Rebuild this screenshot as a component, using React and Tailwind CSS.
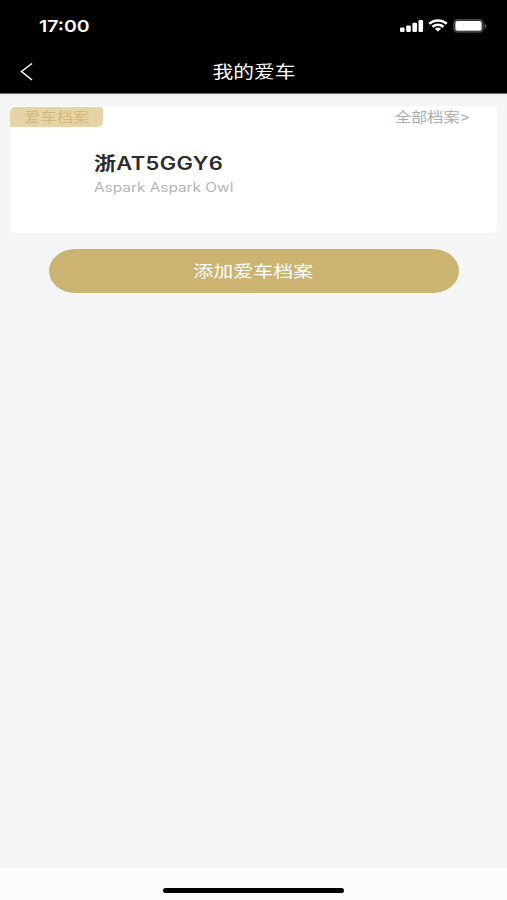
import { useState } from 'react';

// Status bar icons
const SignalIcon = () => (
  <svg width="24" height="13" viewBox="0 0 24 13" fill="#fff">
    <rect x="0" y="7.6" width="4.6" height="4.4" rx="1.2" />
    <rect x="6.2" y="5.4" width="4.6" height="6.6" rx="1.2" />
    <rect x="12.4" y="2.8" width="4.6" height="9.2" rx="1.2" />
    <rect x="18.5" y="0" width="4.6" height="12" rx="1.2" />
  </svg>
);

const WifiIcon = () => (
  <svg width="20" height="13" viewBox="0 0 17 11.6" preserveAspectRatio="none" fill="#fff">
    <path d="M8.5 2.4c2.4 0 4.6.9 6.3 2.5.1.1.3.1.4 0l1.2-1.2c.2-.2.2-.4 0-.5-4.4-4.1-11.4-4.1-15.8 0-.2.1-.2.3 0 .5l1.2 1.2c.1.1.3.1.4 0C3.9 3.3 6.1 2.4 8.5 2.4z" />
    <path d="M8.5 6.3c1.3 0 2.6.5 3.5 1.4.2.1.3.1.5 0l1.2-1.2c.2-.2.2-.4 0-.5-2.9-2.7-7.5-2.7-10.4 0-.2.1-.2.3 0 .5l1.2 1.2c.2.1.3.1.5 0 .9-.9 2.2-1.4 3.5-1.4z" />
    <path d="M10.9 8.9c.2-.1.2-.4 0-.5-1.4-1.2-3.4-1.2-4.8 0-.2.1-.2.4 0 .5l2.1 2.1c.2.2.4.2.6 0z" />
  </svg>
);

const BatteryIcon = () => (
  <svg width="34" height="14" viewBox="0 0 34 14">
    <rect x="0.9" y="0.9" width="29.2" height="12" rx="3.6" fill="none" stroke="#444" strokeWidth="1.6" />
    <rect x="2.3" y="2.1" width="26.4" height="9.6" rx="1.8" fill="#fff" />
    <path d="M31.7 4.9c1.2.4 1.7 1.1 1.7 2s-.5 1.600-1.700 2z" fill="#606060" />
  </svg>
);

const BackIcon = () => (
  <svg width="14" height="19" viewBox="0 0 14 19" fill="none" stroke="#fff" strokeWidth="1.5">
    <path d="M12 1.500 1.500 9.500l10.500 8.500" />
  </svg>
);

const StatusBar = () => (
  <div className="flex h-[50px] items-start justify-between pl-[39px] pr-[20px]">
    <span className="mt-[14px] origin-left scale-x-[1.18] font-['Inter'] text-[16.5px] leading-6 font-semibold">
      17:00
    </span>
    <div className="mt-[19px] flex items-start">
      <div className="mt-[1px] mr-[4px]">
        <SignalIcon />
      </div>
      <div className="mr-[5px]">
        <WifiIcon />
      </div>
      <BatteryIcon />
    </div>
  </div>
);

const NavBar = ({ title }) => (
  <div className="grid h-[43px] grid-cols-[1fr_auto_1fr] items-center">
    <button className="pl-5">
      <BackIcon />
    </button>
    <h1 className="scale-x-[1.22] text-[17px] leading-6">{title}</h1>
  </div>
);

const CarCard = ({ car }) => (
  <section className="mx-[10px] mt-[12px] h-[127px] rounded-[5px] bg-white">
    <div className="flex items-start justify-between">
      <div className="mt-px flex h-5 w-[93px] items-center justify-center rounded-tl-[5px] rounded-tr-[2px] rounded-br-[5px] bg-[#e6d4a8]">
        <span className="scale-x-[1.22] text-[13.4px] leading-5 text-[#d2b877]">爱车档案</span>
      </div>
      <a className="mr-[27px] origin-right scale-x-[1.21] text-[13.4px] leading-[22px] text-[#adadad]">
        全部档案&gt;
      </a>
    </div>
    <div className="ml-[84px] flex flex-col items-start pt-[24px]">
      <p className="origin-left scale-x-[1.22] text-[18px] leading-6 font-semibold tracking-[0.3px] text-[#2b2b2b]">
        {car.plate}
      </p>
      <p className="mt-[2px] origin-left scale-x-[1.22] text-[12.6px] leading-5 text-[#b4b4b4]">
        {car.model}
      </p>
    </div>
  </section>
);

export default function App() {
  const [cars] = useState([{ plate: '浙AT5GGY6', model: 'Aspark Aspark Owl' }]);

  return (
    <div className="flex h-[900px] w-full flex-col overflow-hidden bg-[#f5f5f5] font-['Inter','Noto_Sans_CJK_SC',sans-serif]">
      <header className="border-b border-[#6b6b6b] bg-black text-white">
        <StatusBar />
        <NavBar title="我的爱车" />
      </header>

      <main className="flex-1">
        {cars.map((car) => (
          <CarCard key={car.plate} car={car} />
        ))}

        <button className="mx-auto mt-4 flex h-11 w-[410px] items-center justify-center rounded-[26px/22px] bg-[#cbb372] text-white">
          <span className="scale-x-[1.22] text-[16.4px] leading-6">添加爱车档案</span>
        </button>
      </main>

      {/* Home indicator */}
      <footer className="flex h-8 justify-center bg-[#fafcfd] pt-5">
        <div className="h-[5px] w-[181px] rounded-full bg-black" />
      </footer>
    </div>
  );
}
